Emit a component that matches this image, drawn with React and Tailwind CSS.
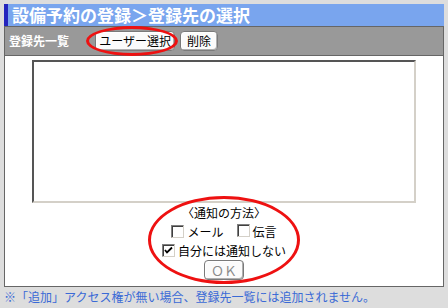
import React from "react";

const font = { fontFamily: '"Noto Sans CJK JP", "Noto Sans", sans-serif' };

function Btn({ children, className = "" }) {
  return (
    <div
      className={
        "flex items-center justify-center h-[20px] bg-[#fbfbfb] border border-[#7a7a7a] rounded-[4px] text-[12px] leading-[12px] text-black shadow-[inset_-1px_-1px_0_#b0b0b0,inset_1px_1px_0_#ffffff] " +
        className
      }
    >
      {children}
    </div>
  );
}

function Check({ checked }) {
  return (
    <span className="inline-flex items-center justify-center w-[13px] h-[13px] bg-white border border-t-[#808080] border-l-[#808080] border-r-[#d4d0c8] border-b-[#d4d0c8] shadow-[inset_1px_1px_0_#404040]">
      {checked && (
        <svg width="9" height="9" viewBox="0 0 9 9">
          <path d="M1 4 L3 6.5 L8 1.5" stroke="#000" strokeWidth="1.8" fill="none" />
        </svg>
      )}
    </span>
  );
}

export default function App() {
  return (
    <div className="relative w-[448px] h-[308px] bg-[#dddddd] overflow-hidden" style={font}>
      <div className="pt-1 px-1">
        <div className="h-[22px] bg-[#79a5ee] border-l-4 border-[#2424bd] pl-1 text-white font-bold text-[17px] leading-[22px] whitespace-nowrap">
          設備予約の登録＞登録先の選択
        </div>
        <div className="w-[440px] border border-[#666666] bg-white">
          <div className="h-[29px] bg-[#999999] border-b border-[#666666] flex items-center pl-1">
            <span className="text-white font-bold text-[12px] leading-[12px]">登録先一覧</span>
            <Btn className="ml-[26px] w-[80px]">ユーザー選択</Btn>
            <Btn className="ml-[5px] w-[38px]">削除</Btn>
          </div>
          <div className="flex flex-col items-center pb-[6px]">
            <div className="mt-[4px] w-[384px] h-[143px] bg-white border-2 border-t-[#555555] border-l-[#555555] border-r-[#d4d0c8] border-b-[#d4d0c8]" />
            <div className="h-[19px] flex items-center text-[12px] text-black">〈通知の方法〉</div>
            <div className="h-[19px] flex items-center text-[12px] text-black">
              <Check />
              <span className="ml-[3px]">メール</span>
              <span className="ml-[13px]"><Check /></span>
              <span className="ml-[3px]">伝言</span>
            </div>
            <div className="h-[19px] flex items-center text-[12px] text-black">
              <Check checked />
              <span className="ml-[3px]">自分には通知しない</span>
            </div>
            <div className="h-[20px] w-[40px] flex items-center justify-center bg-[#fbfbfb] border border-[#7a7a7a] rounded-[4px] text-[13px] leading-[13px] text-[#8a8a8a] shadow-[inset_-1px_-1px_0_#b0b0b0,inset_1px_1px_0_#ffffff]">
              ＯＫ
            </div>
          </div>
        </div>
        <div className="pt-[2px] text-[12px] leading-[16px] text-[#3a6ad6] whitespace-nowrap">
          ※「追加」アクセス権が無い場合、登録先一覧には追加されません。
        </div>
      </div>
      <div className="absolute left-[86px] top-[26px] w-[92px] h-[30px] rounded-[50%] border-[3px] border-[#ee1111]" />
      <div className="absolute left-[148px] top-[196px] w-[152px] h-[88px] rounded-[50%] border-[3px] border-[#ee1111]" />
    </div>
  );
}
